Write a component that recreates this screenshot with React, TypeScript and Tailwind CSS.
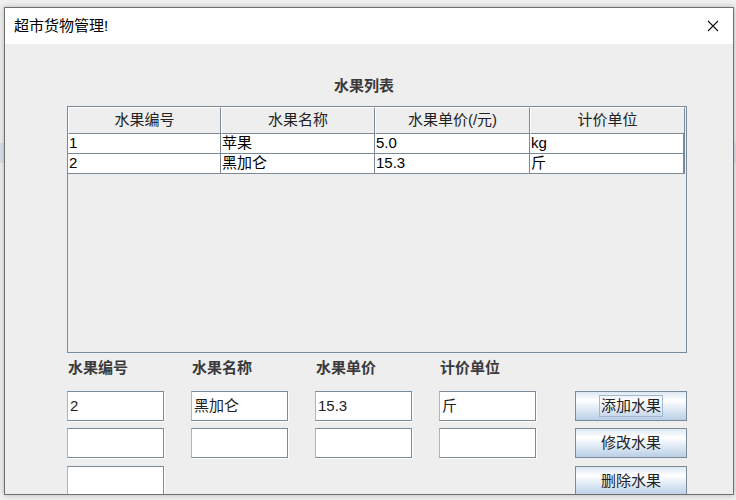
import React from "react";

const font = { fontFamily: '"Liberation Sans", "Noto Sans CJK SC", sans-serif' };

const columns = [
  { title: "水果编号", width: "w-[153px]" },
  { title: "水果名称", width: "w-[154px]" },
  { title: "水果单价(/元)", width: "w-[155px]" },
  { title: "计价单位", width: "w-[155px]" },
];

const fruits = [
  ["1", "苹果", "5.0", "kg"],
  ["2", "黑加仑", "15.3", "斤"],
];

function Field({ value = "" }: { value?: string }) {
  return (
    <div className="w-[97px] h-[30px] border border-[#7a8a99] border-l-[#a9b5c2] bg-white shadow-[1px_1px_0_#ffffff] flex items-center pl-[2px] text-[15px] text-[#222]">
      {value}
    </div>
  );
}

function Button({ label, focused }: { label: string; focused?: boolean }) {
  return (
    <button className="w-[112px] h-[30px] border border-[#7a8a99] bg-[linear-gradient(to_bottom,#dde8f3_0%,#ffffff_30%,#e6eef7_55%,#b9cfe6_100%)] flex items-center justify-center text-[15px] text-[#222]">
      <span className={focused ? "border border-[#a3b8cc] px-[1px] leading-[20px]" : "leading-[20px]"}>{label}</span>
    </button>
  );
}

export default function App() {
  return (
    <div className="relative w-[736px] h-[500px] bg-[#f0f0f0] overflow-hidden pt-[7px] pl-[4px]" style={font}>
      {/* desktop strip behind the window */}
      <div className="absolute left-0 right-0 top-[143px] h-[20px] bg-[#dce3ec]"></div>

      <div className="relative w-[730px] h-[488px] border border-[#6f6f6f] flex flex-col overflow-hidden shadow-[0_0_6px_rgba(0,0,0,0.25)]">
        {/* Title bar */}
        <div className="h-[36px] bg-white flex items-center justify-between pl-[9px] pr-[14px] shrink-0">
          <span className="text-[15px] text-black">超市货物管理!</span>
          <svg width="12" height="12" viewBox="0 0 12 12">
            <path d="M1 1 L11 11 M11 1 L1 11" stroke="#111" strokeWidth="1.1" />
          </svg>
        </div>

        {/* Content */}
        <div className="flex-1 bg-[#eeeeee] pl-[62px]">
          <div className="pt-[30px] h-[50px] pl-[267px]">
            <span className="text-[15px] font-bold leading-[20px] text-[#3a3a3a]">水果列表</span>
          </div>

          {/* Table */}
          <div className="mt-[12px] w-[620px] h-[247px] border border-[#7a8a99] bg-[#eeeeee]">
            <div className="flex">
              {columns.map((c) => (
                <div
                  key={c.title}
                  className={`${c.width} h-[27px] border-r border-b border-[#7a8a99] border-t border-t-white border-l border-l-white flex items-center justify-center text-[15px] text-[#222]`}
                >
                  {c.title}
                </div>
              ))}
            </div>
            {fruits.map((row) => (
              <div key={row[0]} className="flex">
                {row.map((cell, i) => (
                  <div
                    key={i}
                    className={`${columns[i].width} h-[20px] bg-white border-b border-[#7a8a99] ${i === 3 ? "border-r-[2px]" : "border-r"} flex items-center pl-[1px] text-[15px] text-black`}
                  >
                    {cell}
                  </div>
                ))}
              </div>
            ))}
          </div>

          {/* Form */}
          <div className="mt-[5px] flex gap-[27px] pl-[1px] h-[20px] items-center">
            {["水果编号", "水果名称", "水果单价", "计价单位"].map((l) => (
              <span key={l} className="w-[97px] text-[15px] font-bold text-[#3a3a3a] leading-[20px]">
                {l}
              </span>
            ))}
          </div>

          <div className="mt-[13px] flex gap-[27px] items-start">
            <Field value="2" />
            <Field value="黑加仑" />
            <Field value="15.3" />
            <Field value="斤" />
            <div className="ml-[12px]">
              <Button label="添加水果" focused />
            </div>
          </div>

          <div className="mt-[7px] flex gap-[27px] items-start">
            <Field />
            <Field />
            <Field />
            <Field />
            <div className="ml-[12px]">
              <Button label="修改水果" />
            </div>
          </div>

          <div className="mt-[8px] flex items-start">
            <Field />
            <div className="ml-[411px]">
              <Button label="删除水果" />
            </div>
          </div>
        </div>
      </div>
    </div>
  );
}
